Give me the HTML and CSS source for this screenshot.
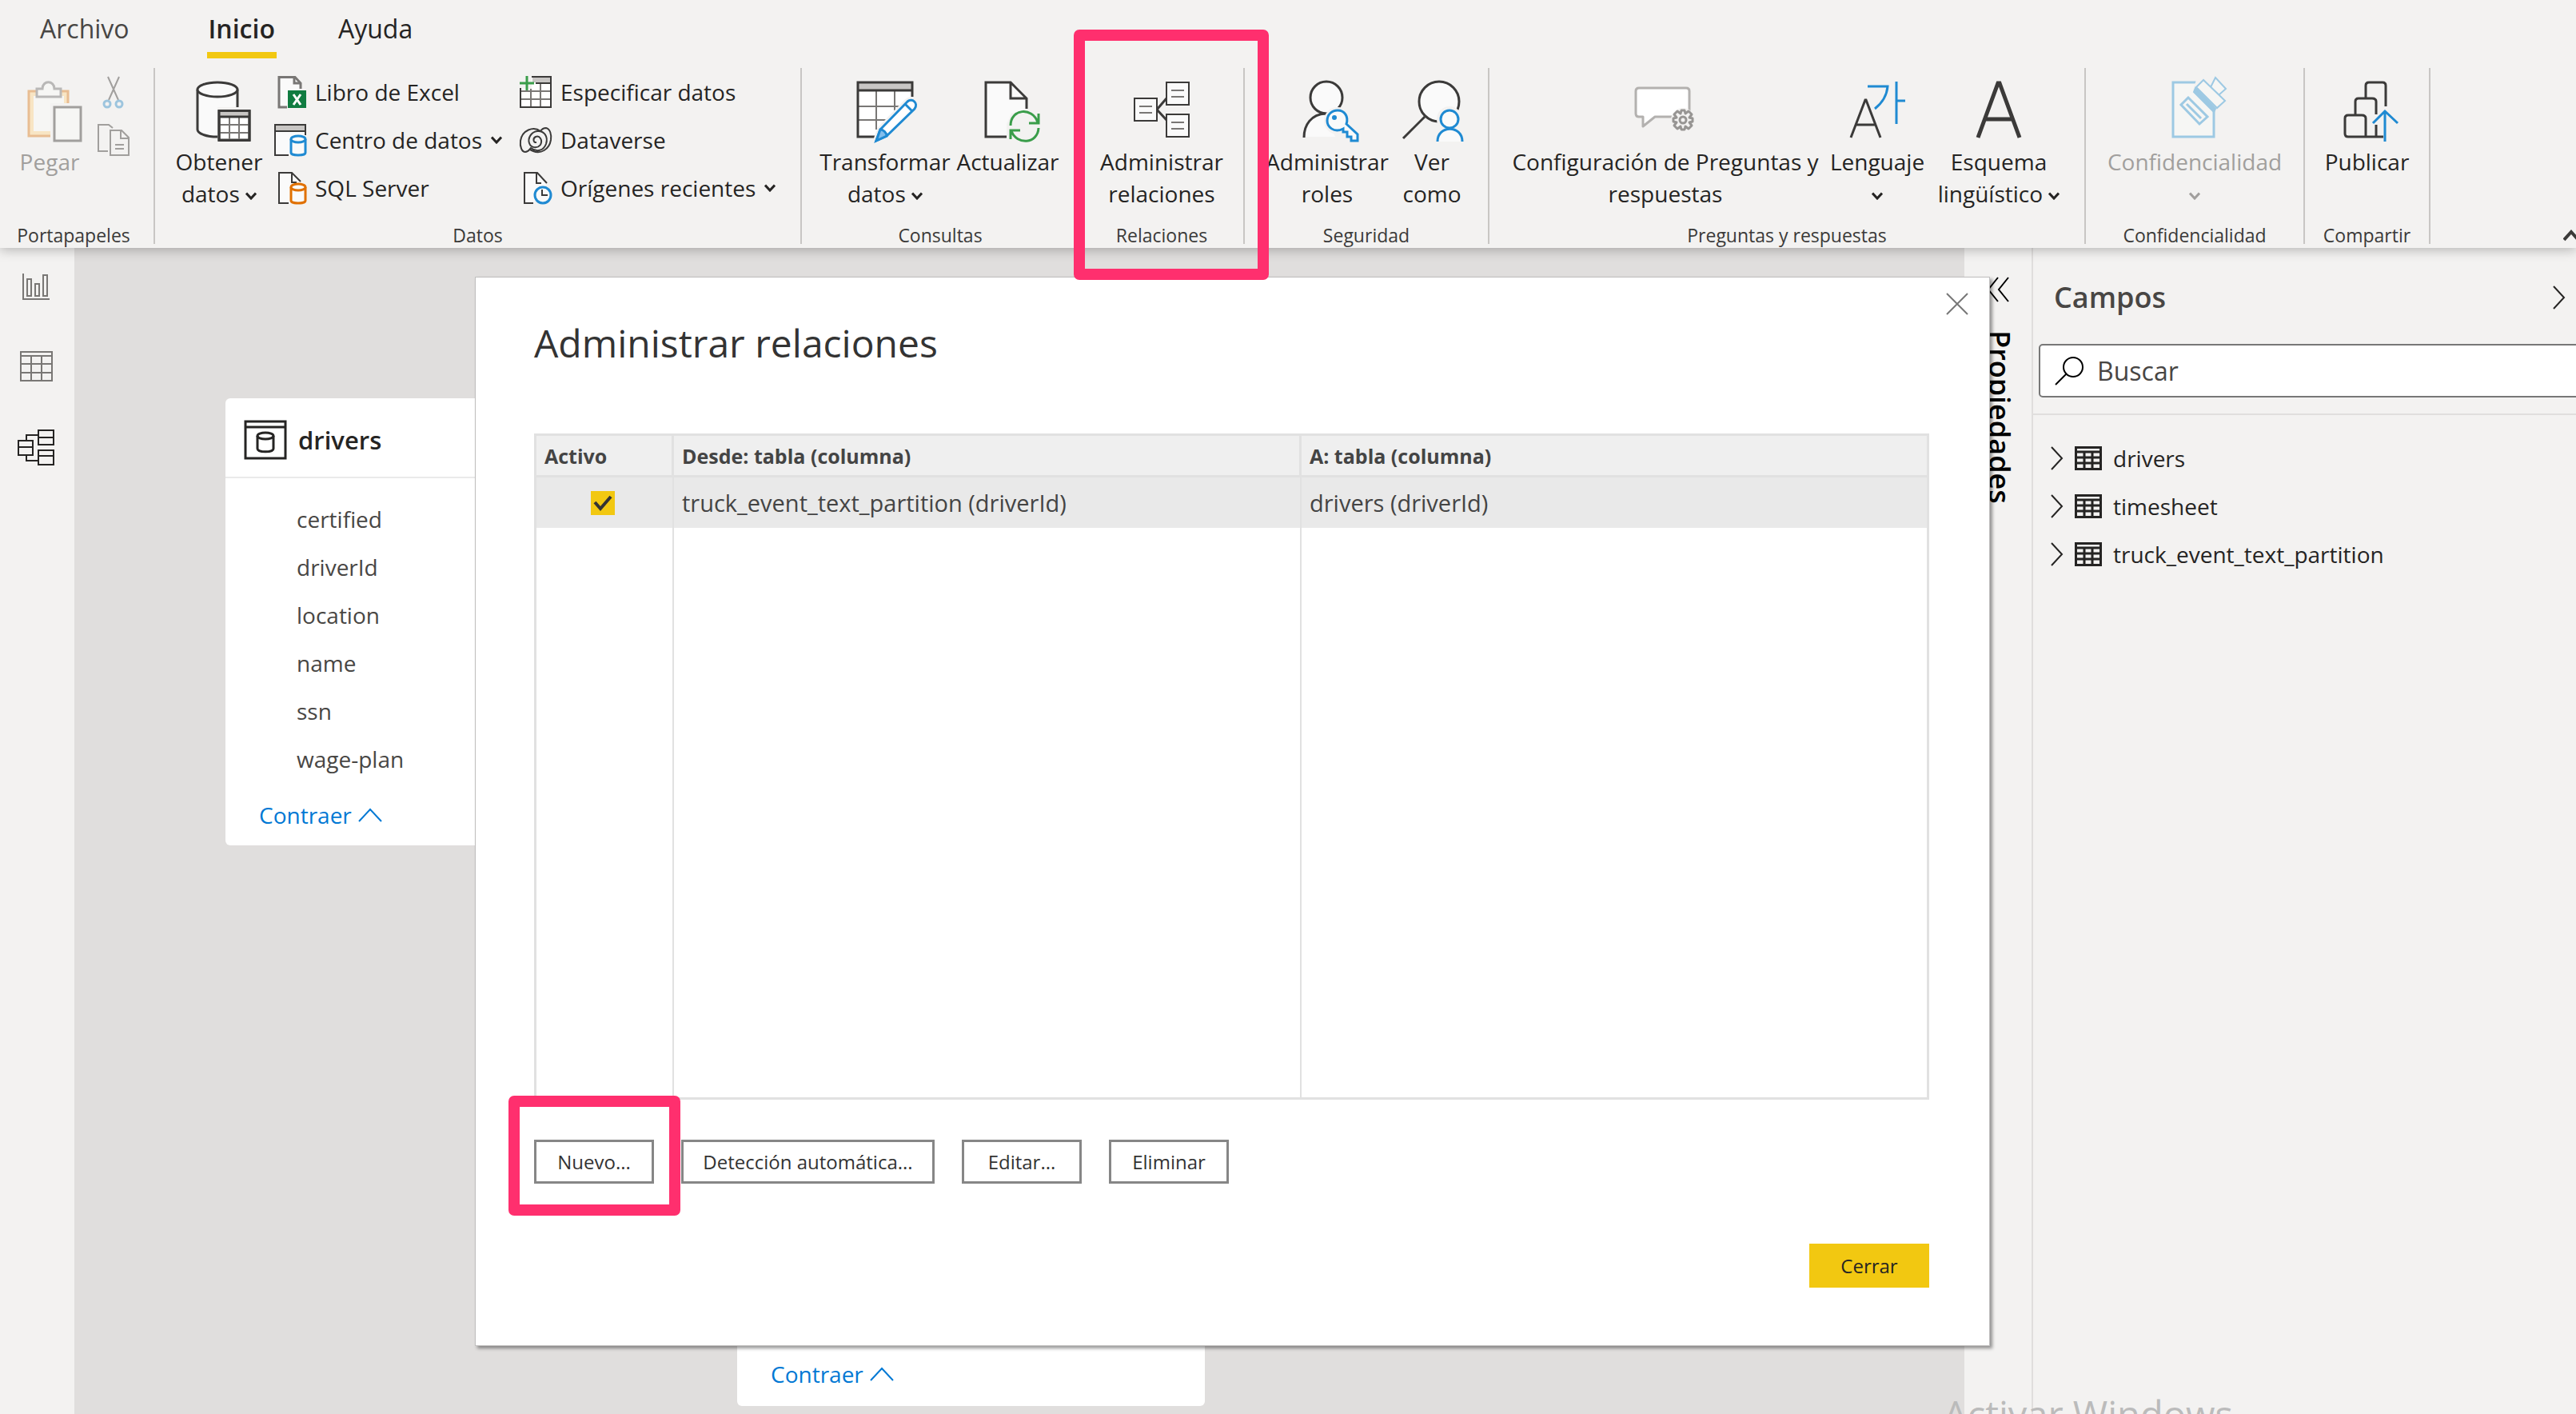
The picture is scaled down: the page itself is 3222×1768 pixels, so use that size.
FILE: index.html
```html
<!DOCTYPE html>
<html lang="es">
<head>
<meta charset="utf-8">
<title>Administrar relaciones</title>
<link rel="stylesheet" href="styles.css">
</head>
<body>
<svg class="defs" aria-hidden="true">
  <symbol id="chev" viewBox="0 0 14 10"><path d="M1 1.500L7 8L13 1.500" fill="none" stroke="currentColor" stroke-width="3"/></symbol>
  <symbol id="caret-up" viewBox="0 0 30 18"><path d="M1 17L15 2L29 17" fill="none" stroke="currentColor" stroke-width="2"/></symbol>
  <symbol id="chev-right" viewBox="0 0 16 30"><path d="M1 1L14 15L1 29" fill="none" stroke="currentColor" stroke-width="2"/></symbol>
  <symbol id="table-icon" viewBox="0 0 34 30"><path d="M1.500 1.500H32.500V28.500H1.500ZM1.500 7H32.500M1.500 14H32.500M1.500 21H32.500M12 7V28M22 7V28" fill="none" stroke="currentColor" stroke-width="3"/></symbol>
</svg>

<header class="ribbon">
  <nav class="tabs">
    <button class="tab tab-file">Archivo</button>
    <button class="tab tab-active">Inicio</button>
    <button class="tab">Ayuda</button>
  </nav>
  <div class="groups">
    <section class="group g-clipboard">
      <div class="tools">
        <button class="big w-paste" disabled>
          <svg class="icon" viewBox="0 0 80 80" fill="none">
            <path d="M14 14H63V70H14Z" fill="#f8e5c4" stroke="#e8bd92" stroke-width="3"/>
            <path d="M20 20H58V64H20Z" fill="#f6f6f4"/>
            <path d="M41 29H80V80H41Z" fill="#f3f2f1"/>
            <path d="M46 34H79V76H46Z" fill="#f6f6f4" stroke="#a19f9d" stroke-width="3"/>
            <path d="M24 11H31C31 0 46 0 46 11H54V21H24Z" fill="#f6f6f4" stroke="#b9b8b7" stroke-width="3"/>
          </svg>
          <span>Pegar</span>
        </button>
        <div class="mini">
          <button aria-label="Cortar" disabled>
            <svg class="icon-s" viewBox="0 0 40 40" fill="none" stroke="#a19f9d" stroke-width="2"><path d="M13 1L26 30M27 1L14 30"/><g stroke="#9dc5de" stroke-width="3"><circle cx="12" cy="35" r="4"/><circle cx="27" cy="35" r="4"/></g></svg>
          </button>
          <button aria-label="Copiar" disabled>
            <svg class="icon-s" viewBox="0 0 40 40" fill="none" stroke="#a19f9d" stroke-width="2"><path d="M13 34H1V1H14L19 5" /><path d="M16 8H30L39 17V39H16ZM29 8V18H39M22 26H33M22 31H33"/></svg>
          </button>
        </div>
      </div>
      <h2>Portapapeles</h2>
    </section>
    <i class="sep"></i>

    <section class="group g-data">
      <div class="tools">
        <button class="big w-get">
          <svg class="icon" viewBox="0 0 80 80" fill="none" stroke="#3b3a39" stroke-width="3">
            <path d="M13 12V62C13 67 24 71 38 71V34H63V12" fill="#fafafa" stroke="none"/>
            <path d="M63 34V12M13 12V62C13 67 24 71 38 71"/>
            <ellipse cx="38" cy="12" rx="25" ry="9" fill="#fafafa"/>
            <path d="M40 39H78V75H40Z" fill="#fff"/>
            <path d="M41 40H77V46H41Z" fill="#c8c6c4" stroke="none"/>
            <path d="M41 56H77M41 66H77M53 46V75M65 46V75" stroke="#797775" stroke-width="2"/>
            <path d="M40 38.500H78V75.500H40ZM40 46H78"/>
          </svg>
          <span>Obtener<br>datos <svg class="chev"><use href="#chev"/></svg></span>
        </button>
        <div class="stack stack-a">
          <button class="small">
            <svg class="icon-s" viewBox="0 0 40 40" fill="none" stroke="#797775" stroke-width="3"><path d="M16 39H6V1.500H26L33 9V16" fill="#fafafa"/><path d="M25 2V9H33"/><path d="M17 18H40V40H17Z" fill="#107c41" stroke="none"/><path d="M24 23L33 36M33 23L24 36" stroke="#fff"/></svg>
            Libro de Excel
          </button>
          <button class="small">
            <svg class="icon-s" viewBox="0 0 40 40" fill="none" stroke="#3b3a39" stroke-width="2"><path d="M18 39H1V1H39V14" fill="#fafafa"/><path d="M2 2H38V8H2Z" fill="#c8c6c4" stroke="none"/><path d="M1 9H39"/><g stroke="#1f8ad2" stroke-width="3" fill="#fafafa"><path d="M21 19V36C21 40 39 40 39 36V19"/><ellipse cx="30" cy="19" rx="9" ry="4"/></g></svg>
            Centro de datos <svg class="chev"><use href="#chev"/></svg>
          </button>
          <button class="small">
            <svg class="icon-s" viewBox="0 0 40 40" fill="none" stroke="#3b3a39" stroke-width="2"><path d="M18 39H6V1H22L33 12" fill="#fafafa"/><path d="M22 1V13H28"/><g stroke="#e07000" stroke-width="3" fill="#fafafa"><path d="M21 19V36C21 40 39 40 39 36V19"/><ellipse cx="30" cy="19" rx="9" ry="4"/></g></svg>
            SQL Server
          </button>
        </div>
        <div class="stack">
          <button class="small">
            <svg class="icon-s" viewBox="0 0 40 40" fill="none" stroke="#3b3a39" stroke-width="2"><path d="M1 16V39H39V1H15V16Z" fill="#fff" stroke="none"/><path d="M16 2H38V8H16Z" fill="#c8c6c4" stroke="none"/><path d="M1 19H39M1 29H39M14 16V39M26 9V39" stroke="#797775"/><path d="M15 1H39V39H1V15M20 9H39"/><path d="M9 0V18M0 9H18" stroke="#3a9d4a" stroke-width="3"/></svg>
            Especificar datos
          </button>
          <button class="small">
            <svg class="icon-s" viewBox="0 0 40 40" fill="none" stroke="#3b3a39" stroke-width="2"><path d="M26 9C17 2 3 8 1 21C0 29 3 35 7 35C11 35 12 32 14 30C22 36 30 33 33 25C36 15 30 8 22 9C14 10 10 18 12 24C14 30 22 31 26 26C29 20 25 14 20 16C16 18 17 24 21 23M26 9C28 6 30 5 33 5C38 6 40 13 39 20C37 32 26 38 17 34C14 33 13 32 12 31"/></svg>
            Dataverse
          </button>
          <button class="small">
            <svg class="icon-s" viewBox="0 0 40 40" fill="none" stroke="#3b3a39" stroke-width="2"><path d="M17 39H6V1H22L34 14" fill="#fafafa"/><path d="M21 1V14H27"/><circle cx="29" cy="29" r="10" stroke="#1f8ad2" stroke-width="3" fill="#fafafa"/><path d="M28 22V29H35"/></svg>
            Orígenes recientes <svg class="chev"><use href="#chev"/></svg>
          </button>
        </div>
      </div>
      <h2>Datos</h2>
    </section>
    <i class="sep"></i>

    <section class="group g-query">
      <div class="tools">
        <button class="big w-transform">
          <svg class="icon" viewBox="0 0 80 80" fill="none" stroke="#3b3a39" stroke-width="3">
            <path d="M6 3H74V30L34 71H6Z" fill="#fff" stroke="none"/>
            <path d="M7 4H73V13H7Z" fill="#c8c6c4" stroke="none"/>
            <path d="M6 33H60M6 50H44M29 13V62M52 13V38" stroke="#797775" stroke-width="2"/>
            <path d="M74 21V3H6V71H28M6 13H74"/>
            <path d="M29 76L34 62L68 27C74 22 82 29 77 36L42 70Z" fill="#fafafa" stroke="#f3f2f1" stroke-width="8"/>
            <path d="M29 76L34 62L68 27C74 22 82 29 77 36L42 70Z" fill="#fff" stroke="#1f8ad2"/>
            <path d="M29 76L34 62C38 62 42 66 42 70Z" fill="#83beec" stroke="#1f8ad2"/><path d="M65 30L74 39" stroke="#1f8ad2"/>
          </svg>
          <span>Transformar<br>datos <svg class="chev"><use href="#chev"/></svg></span>
        </button>
        <button class="big w-refresh">
          <svg class="icon" viewBox="0 0 80 80" fill="none" stroke="#3b3a39" stroke-width="3">
            <path d="M38 71H12V3H43L63 23V36L44 42L38 55Z" fill="#fafafa" stroke="none"/>
            <path d="M38 71H12V3H43L63 23V36M43 3V23H63"/>
            <g stroke="#3a9d4a"><path d="M43 57C43 36 70 33 77 53M78 42V54H66M78 60C77 80 51 82 44 64M43 74V63H55"/></g>
          </svg>
          <span>Actualizar</span>
        </button>
      </div>
      <h2>Consultas</h2>
    </section>
    <i class="sep"></i>

    <section class="group g-relations">
      <div class="tools">
        <button class="big w-admin">
          <svg class="icon" viewBox="0 0 80 80" fill="#fafafa" stroke="#3b3a39" stroke-width="2">
            <path d="M46 23L34 37L46 50" fill="none" stroke-width="3"/>
            <path d="M6 23H34V51H6ZM46 3H74V31H46ZM46 43H74V71H46Z"/>
            <path d="M12 33H28M12 41H28M52 13H68M52 21H68M52 53H68M52 61H68" stroke="#797775"/>
          </svg>
          <span>Administrar<br>relaciones</span>
        </button>
      </div>
      <h2>Relaciones</h2>
      <span class="highlight mark-ribbon"></span>
    </section>
    <i class="sep"></i>

    <section class="group g-security">
      <div class="tools">
        <button class="big w-admin">
          <svg class="icon" viewBox="0 0 80 80" fill="none" stroke="#3b3a39" stroke-width="3">
            <path d="M11 71C11 55 20 43 38 42L50 71Z" fill="#fafafa" stroke="none"/>
            <circle cx="39" cy="22" r="20" fill="#fafafa"/>
            <path d="M11 72C11 56 20 43 38 42"/>
            <circle cx="53" cy="51" r="17" fill="#f3f2f1" stroke="none"/>
            <path d="M64 55L78 68V76H70V71H65V65H60V61C48 67 40 58 40 51C40 43 46 38 53 38C62 38 67 46 64 55Z" fill="#fafafa" stroke="#1f8ad2"/>
            <circle cx="49" cy="47" r="3" fill="#1f8ad2" stroke="none"/>
          </svg>
          <span>Administrar<br>roles</span>
        </button>
        <button class="big w-view">
          <svg class="icon" viewBox="0 0 80 80" fill="none" stroke="#3b3a39" stroke-width="3">
            <circle cx="49" cy="27" r="25" fill="#fafafa"/><path d="M31 46L4 73"/>
            <circle cx="62" cy="49" r="16" fill="#f3f2f1" stroke="none"/><path d="M44 78C44 56 80 56 80 78Z" fill="#f3f2f1" stroke="none"/>
            <circle cx="62" cy="49" r="11" fill="#fafafa" stroke="#1f8ad2"/>
            <path d="M47 77C47 56 78 56 78 77" fill="#fafafa" stroke="#1f8ad2"/>
          </svg>
          <span>Ver<br>como</span>
        </button>
      </div>
      <h2>Seguridad</h2>
    </section>
    <i class="sep"></i>

    <section class="group g-qa">
      <div class="tools">
        <button class="big w-setup">
          <svg class="icon" viewBox="0 0 80 80" fill="#fff" stroke="#b3b1af" stroke-width="3" stroke-linejoin="round">
            <path d="M7 10H66Q70 10 70 14V46H27L12 58V46H7Q3 46 3 42V14Q3 10 7 10Z"/>
            <circle cx="62" cy="50" r="15" fill="#f3f2f1" stroke="none"/>
            <path d="M60 38H64L65 42L69 39L73 43L70 47L74 48V52L70 53L73 57L69 61L65 58L64 62H60L59 58L55 61L51 57L54 53L50 52V48L54 47L51 43L55 39L59 42Z" fill="#f3f2f1" stroke="#979593"/>
            <circle cx="62" cy="50" r="4" fill="#f3f2f1" stroke="#979593"/>
          </svg>
          <span>Configuración de Preguntas y<br>respuestas</span>
        </button>
        <button class="big w-lang">
          <svg class="icon" viewBox="0 0 80 80" fill="none" stroke-width="3">
            <path d="M7 72L25 25H26L44 72M13 56H38" stroke="#3b3a39"/>
            <path d="M28 8H53C52 20 47 28 37 36M64 2V55M64 26H75" stroke="#1f8ad2"/>
          </svg>
          <span>Lenguaje<br><svg class="chev"><use href="#chev"/></svg></span>
        </button>
        <button class="big w-schema">
          <svg class="icon" viewBox="0 0 80 80" fill="none" stroke="#3b3a39" stroke-width="5"><path d="M14 72L39 4H41L66 72M22 49H58"/></svg>
          <span>Esquema<br>lingüístico <svg class="chev"><use href="#chev"/></svg></span>
        </button>
      </div>
      <h2>Preguntas y respuestas</h2>
    </section>
    <i class="sep"></i>

    <section class="group g-privacy">
      <div class="tools">
        <button class="big w-privacy" disabled>
          <svg class="icon" viewBox="0 0 80 80" fill="#f6f6f4" stroke="#9dc9e3" stroke-width="2">
            <path d="M13 3H64V71H13Z" stroke-width="3"/>
            <path d="M43 -3L80 -3V40H68L38 12Z" fill="#f3f2f1" stroke="none"/>
            <path d="M32 22L23 31L46 55L56 46ZM30 30L48 48" stroke-width="3"/>
            <path d="M66 -3L60 9L70 19L79 11Z"/>
            <path d="M41 10L66 36L64 40L39 15Z" fill="#9dc9e3"/>
            <path d="M51 0L42 9L68 35L78 26Z"/>
          </svg>
          <span>Confidencialidad<br><svg class="chev"><use href="#chev"/></svg></span>
        </button>
      </div>
      <h2>Confidencialidad</h2>
    </section>
    <i class="sep"></i>

    <section class="group g-share">
      <div class="tools">
        <button class="big w-publish">
          <svg class="icon" viewBox="0 0 80 80" fill="none" stroke="#3b3a39" stroke-width="3">
            <path d="M60 71H16Q12 71 12 67V48Q12 44 16 44H33Q38 44 38 48V71M25 44V27Q25 23 29 23H46Q51 23 51 27V43M51 56V71M38 23V7Q38 3 42 3H59Q63 3 63 7V33"/>
            <path d="M62 77V39M47 54L62 39L78 54" stroke="#1f8ad2"/>
          </svg>
          <span>Publicar</span>
        </button>
      </div>
      <h2>Compartir</h2>
    </section>
    <i class="sep"></i>
    <button class="collapse" aria-label="Contraer cinta"><svg viewBox="0 0 20 16"><path d="M1 14L10 4L19 14" fill="none" stroke="#3b3a39" stroke-width="4"/></svg></button>
  </div>
</header>

<main class="workspace">
  <nav class="rail">
    <button aria-label="Informe"><svg width="48" height="48" viewBox="0 0 48 48" fill="none" stroke="#797775" stroke-width="2"><path d="M8 6V38H41M13 13H18V34H13ZM23 19H28V34H23ZM33 8H38V34H33Z"/></svg></button>
    <button aria-label="Datos"><svg width="48" height="48" viewBox="0 0 48 48" fill="none" stroke="#797775" stroke-width="2"><path d="M5 4H44V40H5ZM5 9H44M5 19H44M5 30H44M18 9V40M31 9V40"/></svg></button>
    <button aria-label="Modelo"><svg width="48" height="48" viewBox="0 0 48 48" fill="none" stroke="#252423" stroke-width="2"><path d="M2 15H20V33H2ZM2 23H20M27 2H46V20H27ZM27 11H46M27 27H46V45H27ZM27 34H46M12 15V8H27M12 33V40H27"/></svg></button>
  </nav>

  <section class="canvas">
    <article class="card card-drivers">
      <header>
        <svg width="54" height="50" viewBox="0 0 54 50" fill="none" stroke="#252423" stroke-width="3"><path d="M2 2H52V48H2ZM2 9H52"/><path d="M17 20V36C17 41 37 41 37 36V20"/><ellipse cx="27" cy="20" rx="10" ry="4"/></svg>
        <h3>drivers</h3>
      </header>
      <ul>
        <li>certified</li><li>driverId</li><li>location</li><li>name</li><li>ssn</li><li>wage-plan</li>
      </ul>
      <button class="fold">Contraer <svg width="30" height="18"><use href="#caret-up"/></svg></button>
    </article>
    <article class="card card-lower">
      <button class="fold">Contraer <svg width="30" height="18"><use href="#caret-up"/></svg></button>
    </article>
  </section>

  <aside class="props">
    <button aria-label="Expandir"><svg width="28" height="32" viewBox="0 0 28 32" fill="none" stroke="#000" stroke-width="2"><path d="M14 1L2 16L14 31M27 1L15 16L27 31"/></svg></button>
    <h2>Propiedades</h2>
  </aside>

  <aside class="fields">
    <header>
      <h2>Campos</h2>
      <button aria-label="Ocultar"><svg width="16" height="30"><use href="#chev-right"/></svg></button>
    </header>
    <label class="search">
      <svg width="36" height="36" viewBox="0 0 36 36" fill="none" stroke="#000" stroke-width="2"><circle cx="23" cy="13" r="12"/><path d="M15 21L1 35"/></svg>
      <input type="text" placeholder="Buscar" aria-label="Buscar">
    </label>
    <ul>
      <li><svg width="16" height="30"><use href="#chev-right"/></svg><svg width="34" height="30"><use href="#table-icon"/></svg>drivers</li>
      <li><svg width="16" height="30"><use href="#chev-right"/></svg><svg width="34" height="30"><use href="#table-icon"/></svg>timesheet</li>
      <li><svg width="16" height="30"><use href="#chev-right"/></svg><svg width="34" height="30"><use href="#table-icon"/></svg>truck_event_text_partition</li>
    </ul>
  </aside>
</main>

<div class="dialog" role="dialog" aria-labelledby="dialog-title">
  <button class="close" aria-label="Cerrar ventana"><svg width="28" height="28" viewBox="0 0 28 28"><path d="M1 1L27 27M27 1L1 27" stroke="#777" stroke-width="2"/></svg></button>
  <h1 id="dialog-title">Administrar relaciones</h1>
  <table>
    <thead>
      <tr><th class="col-active">Activo</th><th class="col-from">Desde: tabla (columna)</th><th>A: tabla (columna)</th></tr>
    </thead>
    <tbody>
      <tr class="selected"><td class="check"><input type="checkbox" checked aria-label="Activo"></td><td>truck_event_text_partition (driverId)</td><td>drivers (driverId)</td></tr>
      <tr class="empty"><td></td><td></td><td></td></tr>
    </tbody>
  </table>
  <div class="actions">
    <span class="marked"><button>Nuevo...</button><span class="highlight mark-new"></span></span>
    <button class="auto">Detección automática...</button>
    <button>Editar...</button>
    <button>Eliminar</button>
  </div>
  <div class="footer"><button>Cerrar</button></div>
</div>
<div class="watermark">Activar Windows</div>
</body>
</html>
```
FILE: styles.css
```css
* { box-sizing: border-box; }

body {
  margin: 0;
  height: 100vh;
  display: flex;
  flex-direction: column;
  position: relative;
  overflow: hidden;
  background: #f3f2f1;
  color: #252423;
  font-family: "Open Sans", "Noto Sans", sans-serif;
  font-size: 28px;
  line-height: 40px;
}

h1, h2, h3, ul { margin: 0; padding: 0; font-weight: 400; }
ul { list-style: none; }
button {
  padding: 0;
  border: 0;
  background: none;
  color: inherit;
  font: inherit;
  white-space: nowrap;
}
svg { flex: none; }
.defs { position: absolute; width: 0; height: 0; }

/* Ribbon */
.ribbon {
  position: relative;
  z-index: 2;
  background: #f3f2f1;
  box-shadow: 0 2px 14px rgba(0, 0, 0, 0.28);
}
.tabs { display: flex; gap: 75px; padding-left: 48px; }
.tab {
  padding: 14px 2px 7px;
  border-bottom: 8px solid transparent;
  font-size: 32px;
  line-height: 44px;
}
.tab-file { margin-right: 20px; color: #484644; }
.tab-active { border-color: #f2c811; font-weight: 600; }

.groups { display: flex; height: 237px; }
.sep { flex: none; width: 2px; margin: 12px 0 5px; background: #c8c6c4; }
.group {
  position: relative;
  flex: none;
  display: flex;
  flex-direction: column;
  justify-content: space-between;
}
.group h2 { font-size: 23px; line-height: 32px; text-align: center; color: #3b3a39; }
.g-clipboard { width: 192px; }
.g-clipboard h2 { padding-right: 8px; }
.g-data { width: 807px; }
.g-query { width: 346px; }
.g-relations { width: 204px; }
.g-security { width: 304px; }
.g-qa { width: 744px; }
.g-privacy { width: 272px; }
.g-share { width: 155px; }

.tools { display: flex; justify-content: center; }
.g-clipboard .tools { justify-content: flex-start; padding-left: 22px; }
.g-data .tools { justify-content: flex-start; padding-left: 20px; }
.big {
  display: flex;
  flex-direction: column;
  align-items: center;
  gap: 2px;
  padding-top: 27px;
  text-align: center;
}
.big:disabled { color: #a19f9d; }
.icon { width: 80px; height: 80px; overflow: visible; }
.icon-s { width: 40px; height: 40px; overflow: visible; }
.chev { width: 14px; height: 10px; vertical-align: 3px; }
.w-paste { width: 80px; }
.w-get { width: 120px; }
.w-transform { width: 169px; }
.w-refresh { width: 138px; }
.w-admin { width: 164px; }
.w-view { width: 98px; }
.w-setup { width: 400px; }
.w-lang { width: 130px; }
.w-schema { width: 174px; }
.w-privacy { width: 230px; }
.w-publish { width: 120px; }
.mini { display: flex; flex-direction: column; gap: 20px; padding: 22px 0 0 20px; }
.mini button, .mini svg { display: block; }
.stack { display: flex; flex-direction: column; align-items: flex-start; padding-top: 12px; }
.stack-a { width: 307px; margin-left: 9px; }
.small { display: flex; align-items: center; gap: 11px; height: 60px; }
.collapse { margin-left: auto; align-self: flex-end; overflow: hidden; width: 16px; height: 32px; }
.collapse svg { display: block; width: 20px; height: 16px; }

/* Workspace */
.workspace { flex: 1; display: flex; min-height: 0; }
.rail { flex: none; width: 93px; display: flex; flex-direction: column; }
.rail button { height: 100px; padding-right: 4px; }
.rail svg { display: block; margin: auto; }
.canvas { flex: 1; position: relative; overflow: hidden; background: #e0dedd; }

.card { position: absolute; width: 585px; background: #fff; border-radius: 6px; }
.card-drivers { left: 189px; top: 188px; padding-bottom: 18px; }
.card-lower { left: 829px; bottom: 10px; min-height: 160px; display: flex; align-items: flex-end; padding-bottom: 20px; }
.card header { display: flex; align-items: center; gap: 14px; height: 100px; padding: 6px 23px 0; border-bottom: 2px solid #eaeaea; }
.card h3 { font-size: 31px; font-weight: 600; }
.card ul { padding: 21px 0 20px 89px; color: #484644; line-height: 60px; }
.fold { display: flex; align-items: center; gap: 8px; padding-left: 42px; color: #0078d4; }

.props { flex: none; width: 84px; padding: 36px 0 0 19px; color: #000; }
.props button, .props svg { display: block; }
.props button { margin-left: 9px; }
.props h2 { margin-top: 35px; font-size: 36px; line-height: 50px; font-weight: 600; writing-mode: vertical-rl; }

.fields { flex: none; width: 681px; border-left: 2px solid #e0dedd; overflow: hidden; }
.fields header { display: flex; justify-content: space-between; align-items: center; padding: 38px 13px 0 26px; }
.fields h2 { font-size: 36px; line-height: 48px; font-weight: 600; color: #484644; }
.fields header button, .fields header svg { display: block; }
.search {
  display: flex;
  align-items: center;
  gap: 17px;
  height: 67px;
  margin: 34px -20px 20px 7px;
  padding-left: 18px;
  background: #fff;
  border: 2px solid #777;
  border-radius: 5px;
}
.search input { flex: 1; min-width: 0; padding: 0; border: 0; outline: 0; background: none; font: inherit; font-size: 32px; }
.search input::placeholder { color: #484644; opacity: 1; }
.fields ul { padding: 24px 0 0 22px; border-top: 2px solid #e0dedd; }
.fields li { display: flex; align-items: center; gap: 14px; height: 60px; }

/* Dialog */
.dialog {
  position: absolute;
  z-index: 1;
  top: 346px;
  left: 594px;
  right: 733px;
  padding: 50px 75px 72px 73px;
  background: #fff;
  border: 1px solid #c0bfbe;
  box-shadow: 3px 3px 4px rgba(0, 0, 0, 0.4);
}
.close { position: absolute; top: 19px; right: 26px; }
.close svg { display: block; }
.dialog h1 { margin-bottom: 81px; font-size: 48px; font-weight: 500; line-height: 64px; color: #333; }

table { width: 100%; table-layout: fixed; border: 3px solid #e1e1e1; border-spacing: 0; color: #444; }
th, td { padding: 0 10px; text-align: left; }
th { height: 52px; background: #efefef; border-bottom: 3px solid #e1e1e1; border-right: 3px solid #e1e1e1; font-size: 25px; font-weight: 700; }
td { border-right: 2px solid #e1e1e1; font-size: 29px; }
th:last-child, td:last-child { border-right: 0; }
.col-active { width: 172px; }
.col-from { width: 785px; }
.selected td { height: 63px; background: #e9e9e9; }
.empty td { height: 712px; }
.selected .check { padding: 0 4px 0 0; text-align: center; }
.check input {
  appearance: none;
  display: block;
  width: 30px;
  height: 30px;
  margin: 0 auto;
  background: #f2c811 url("data:image/svg+xml,%3Csvg xmlns='http://www.w3.org/2000/svg' viewBox='0 0 30 30'%3E%3Cpath d='M5 14L12 22L25 7' fill='none' stroke='%23333' stroke-width='4'/%3E%3C/svg%3E");
}

.actions { display: flex; gap: 34px; margin-top: 50px; }
.actions button, .footer button {
  width: 150px;
  height: 55px;
  border: 3px solid #868686;
  background: #fff;
  color: #333;
  font-size: 24px;
}
.actions .auto { width: 317px; }
.marked { position: relative; display: flex; }
.footer { display: flex; justify-content: flex-end; margin-top: 75px; }
.footer button { border: 0; background: #f2c811; color: #252423; }

/* Marker frames laid over the interface */
.highlight { position: absolute; z-index: 3; border: 14px solid #ff2f6e; border-radius: 7px; pointer-events: none; }
.mark-ribbon { top: -36px; left: -8px; width: 244px; height: 313px; }
.mark-new { top: -55px; left: -32px; width: 215px; height: 150px; }

.watermark { position: absolute; left: 2431px; bottom: -32px; font-size: 47px; line-height: 64px; color: #bbb; }
```
